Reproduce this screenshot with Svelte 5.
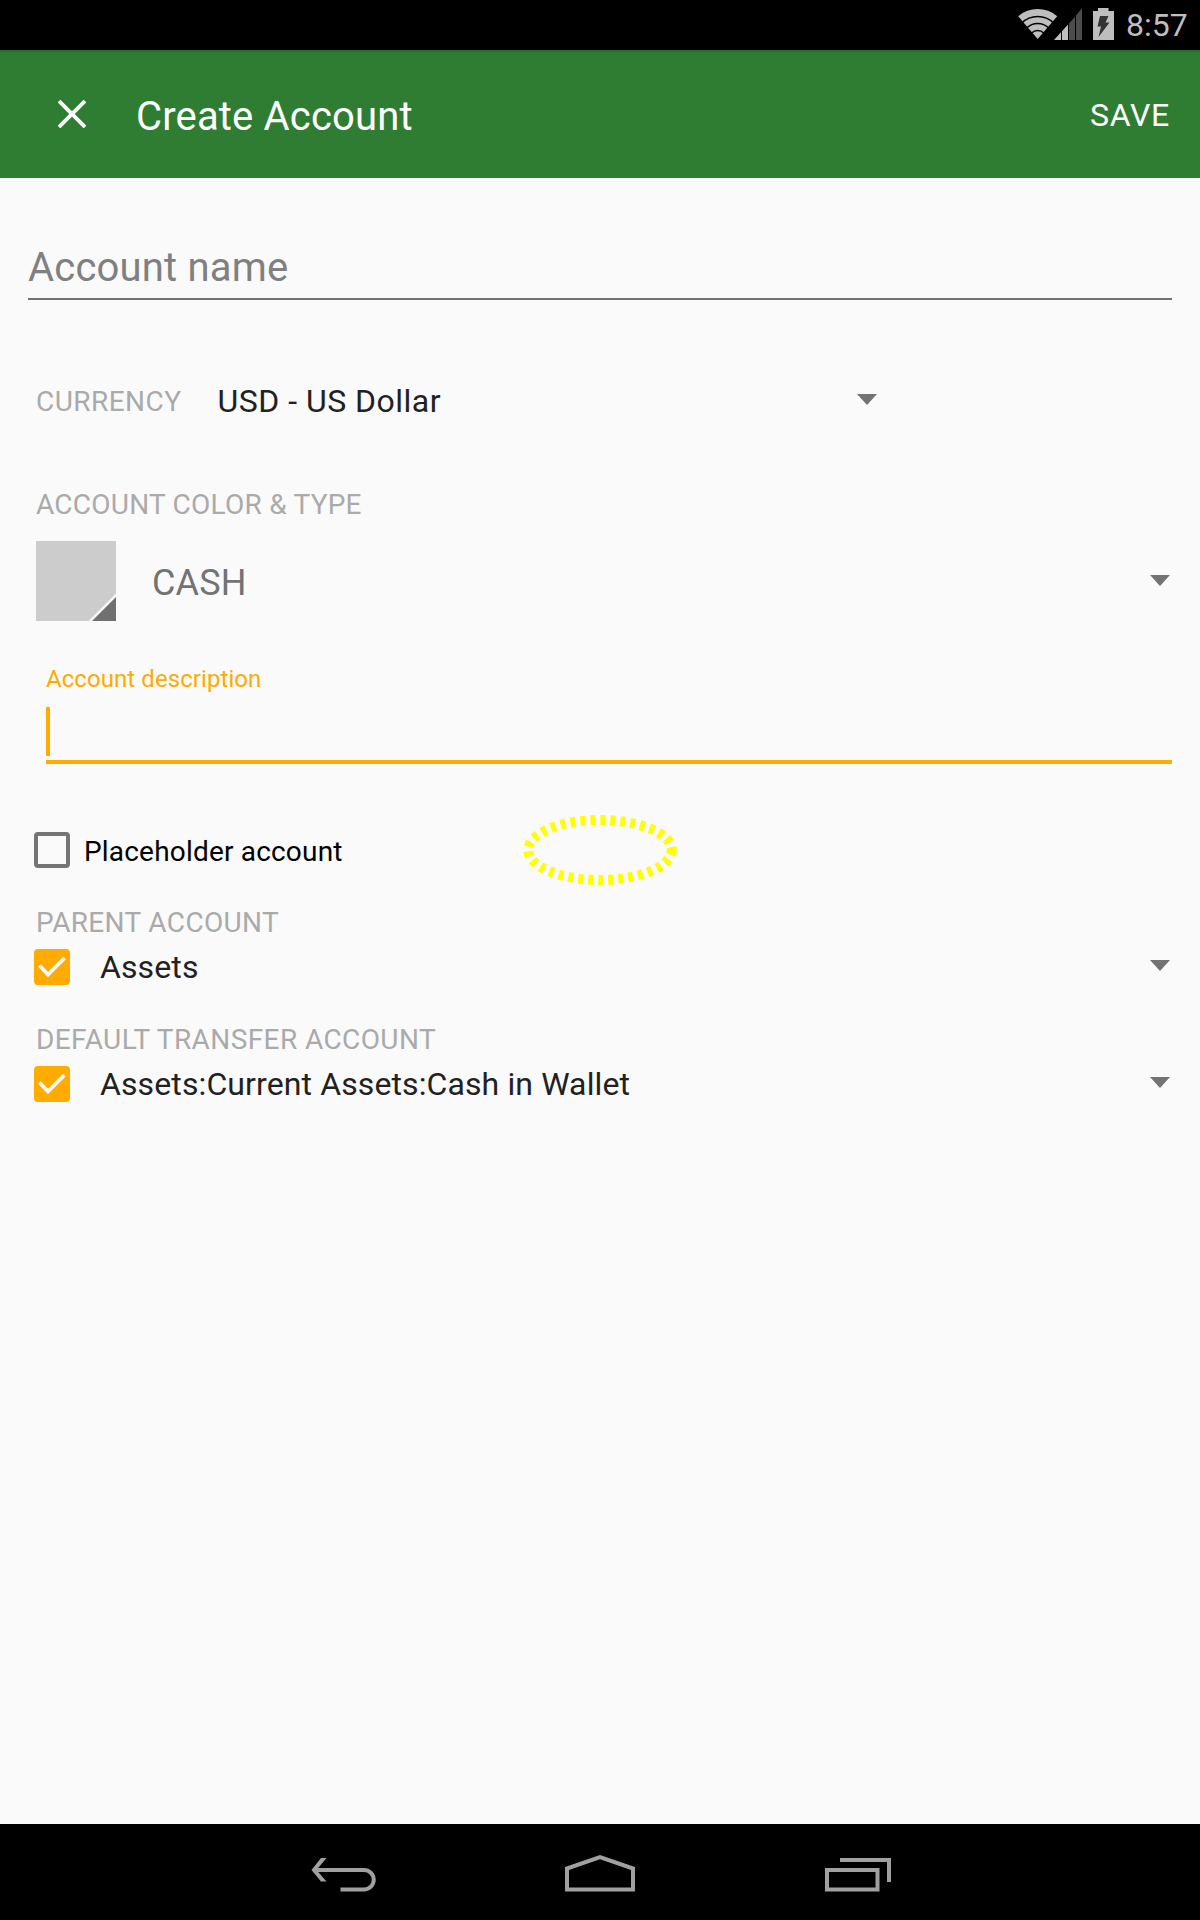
<script>
  const accounts = [
    { label: 'PARENT ACCOUNT', value: 'Assets', id: 'parent' },
    { label: 'DEFAULT TRANSFER ACCOUNT', value: 'Assets:Current Assets:Cash in Wallet', id: 'transfer' },
  ];
</script>

{#snippet caret()}
  <svg class="caret" width="20" height="11" viewBox="0 0 20 11"><path d="M0 0H20L10 11Z" fill="#737373" /></svg>
{/snippet}

<div class="screen">
  <div class="status">
    <svg width="98" height="50" viewBox="1017 0 98 50">
      <path d="M1037.7 39 L1018.2 16.2 A30 30 0 0 1 1057.2 16.2 Z" fill="#bebebe" />
      <g fill="none" stroke="#000" stroke-width="1.5">
        <circle cx="1037.7" cy="39" r="22.6" />
        <circle cx="1037.7" cy="39" r="15.6" />
        <circle cx="1037.7" cy="39" r="8.6" />
      </g>
      <path d="M1054 40L1061 32.3V40ZM1062 31.2L1068 24.5V40H1062Z" fill="#bebebe" />
      <path d="M1069 23.4L1075 16.7V40H1069ZM1076 15.6L1082 8V40H1076Z" fill="#4c4c4c" />
      <path d="M1093 11H1098V8H1108.500V11H1114V40H1093Z" fill="#bebebe" />
      <path d="M1100 16H1108.500L1105.500 22.500H1109.500L1098.500 37L1101 26.500H1097.500Z" fill="#333" />
    </svg>
    <span class="time">8:57</span>
  </div>

  <header class="appbar">
    <svg class="close" width="28" height="28" viewBox="0 0 28 28"><path d="M1 1L27 27M27 1L1 27" stroke="#fff" stroke-width="3.8" /></svg>
    <span class="title">Create Account</span>
    <span class="save">SAVE</span>
  </header>

  <main>
    <div class="name"><span>Account name</span></div>

    <div class="currency">
      <span class="label currency-label">CURRENCY</span>
      <span class="value usd">USD - US Dollar</span>
      {@render caret()}
    </div>

    <div class="label type-label">ACCOUNT COLOR &amp; TYPE</div>
    <div class="type">
      <svg width="80" height="80" viewBox="0 0 80 80">
        <rect width="80" height="80" fill="#ccc" />
        <path d="M80 52.500V80H52.500Z" fill="#f7f7f7" />
        <path d="M80 56V80H56Z" fill="#707070" />
      </svg>
      <span class="cash">CASH</span>
      {@render caret()}
    </div>

    <div class="desc">
      <span class="hint">Account description</span>
      <div class="cursor"></div>
    </div>

    <div class="placeholder">
      <span class="box"></span>
      <span class="ptext">Placeholder account</span>
      <svg class="marker" width="160" height="80" viewBox="0 0 160 80">
        <ellipse cx="80" cy="40" rx="71.800" ry="30" fill="none" stroke="#ff0" stroke-width="10" stroke-dasharray="5 5" />
      </svg>
    </div>

    {#each accounts as a}
      <div class="label section {a.id}">{a.label}</div>
      <div class="pick">
        <svg width="36" height="36" viewBox="0 0 36 36">
          <rect width="36" height="36" rx="4" fill="#ffab00" />
          <path d="M5.500 16.500L14 25.500L30.500 9" fill="none" stroke="#fafafa" stroke-width="3.800" />
        </svg>
        <span class="value">{a.value}</span>
        {@render caret()}
      </div>
    {/each}
  </main>

  <nav>
    <svg width="66" height="36" viewBox="311.500 1856 66 36" fill="none" stroke="#a0a0a0" stroke-width="4">
      <path d="M341 1889.500H364.500A9.750 9.750 0 0 0 364.500 1870H315" />
      <path d="M312 1870L321.500 1858H327L317 1870L327 1881.500H321.500Z" fill="#a0a0a0" stroke="none" />
    </svg>
    <svg width="72" height="40" viewBox="564 1853 72 40" fill="none" stroke="#a0a0a0" stroke-width="4">
      <path d="M567 1889.500V1868.500L600 1857L633 1868.500V1889.500Z" />
    </svg>
    <svg width="68" height="36" viewBox="824 1857 68 36" fill="none" stroke="#a0a0a0" stroke-width="4">
      <path d="M827 1870H877.500V1889.500H827ZM840 1860H889V1882" />
    </svg>
  </nav>
</div>

<style>
  :global(body) { background: #fafafa; }
  .screen {
    width: 1200px; height: 1920px; display: flex; flex-direction: column;
    background: #fafafa; font-family: Roboto, sans-serif; color: #212121; overflow: hidden;
    white-space: nowrap;
  }
  svg { display: block; flex: none; }
  .status {
    height: 50px; background: #000; display: flex; align-items: center;
    padding-left: 1017px; flex: none;
  }
  .time { margin-left: 11px; font-size: 32px; line-height: 50px; color: #bebebe; }
  .appbar {
    height: 128px; flex: none; display: flex; align-items: center; color: #fff;
    background: linear-gradient(#28692b, #2e7a31 3px, #2f7d32 9px);
    padding: 0 30px 0 58px; box-sizing: border-box;
  }
  .title { font-size: 40px; margin-left: 50px; padding-top: 4px; letter-spacing: 0.17px; }
  .save { font-size: 32px; margin-left: auto; padding-top: 1px; letter-spacing: 0.7px; }
  main { flex: 1; padding-right: 28px; }
  .name {
    margin: 58px 0 0 28px; height: 62px; line-height: 63px; font-size: 40px;
    letter-spacing: 0.2px; color: #808080; border-bottom: 2px solid #737373;
  }
  .currency {
    height: 64px; margin-top: 69px; padding-left: 36px; display: flex; align-items: center;
    width: 841px;
  }
  .label { font-size: 28px; line-height: 34px; height: 32px; color: #aaa; }
  .currency-label { letter-spacing: 0.46px; }
  .value { font-size: 32px; line-height: 36px; letter-spacing: 0.11px; }
  .usd { margin-left: 36px; letter-spacing: 0.49px; }
  .caret { margin-left: auto; margin-right: 2px; margin-bottom: 3px; }
  .currency .caret { margin-right: 0; }
  .type-label { margin: 55px 0 0 36px; letter-spacing: 0.24px; }
  .type { margin: 21px 0 0 36px; height: 80px; display: flex; align-items: center; }
  .type .caret { margin-bottom: 2px; }
  .cash { margin-left: 36px; font-size: 36px; padding-top: 3px; color: #737373; letter-spacing: 0.15px; }
  .desc { margin: 44px 0 0 46px; border-bottom: 4px solid #ffab00; padding-bottom: 4px; }
  .hint { display: block; font-size: 24px; line-height: 28px; color: #ffab00; letter-spacing: 0.07px; }
  .cursor { width: 4px; height: 49px; margin-top: 14px; background: #ffab00; }
  .placeholder {
    position: relative; margin: 68px 0 0 34px; height: 36px; display: flex; align-items: center;
    color: #000; font-size: 28px; letter-spacing: 0.19px;
  }
  .box { width: 36px; height: 36px; box-sizing: border-box; border: 4px solid #757575; border-radius: 4px; }
  .ptext { margin-left: 14px; padding-top: 2px; }
  .marker { position: absolute; left: 486px; top: -22px; }
  .section { margin: 38px 0 0 36px; }
  .parent { letter-spacing: 0.35px; }
  .transfer { letter-spacing: 0.41px; }
  .pick { margin: 11px 0 0 34px; height: 36px; display: flex; align-items: center; }
  .pick .value { margin-left: 30px; }
  nav {
    height: 96px; flex: none; background: #000; display: flex; align-items: flex-start;
    padding-left: 311px; box-sizing: border-box;
  }
  nav svg:nth-child(1) { margin-top: 32px; }
  nav svg:nth-child(2) { margin: 29px 0 0 187px; }
  nav svg:nth-child(3) { margin: 33px 0 0 188px; }
</style>
